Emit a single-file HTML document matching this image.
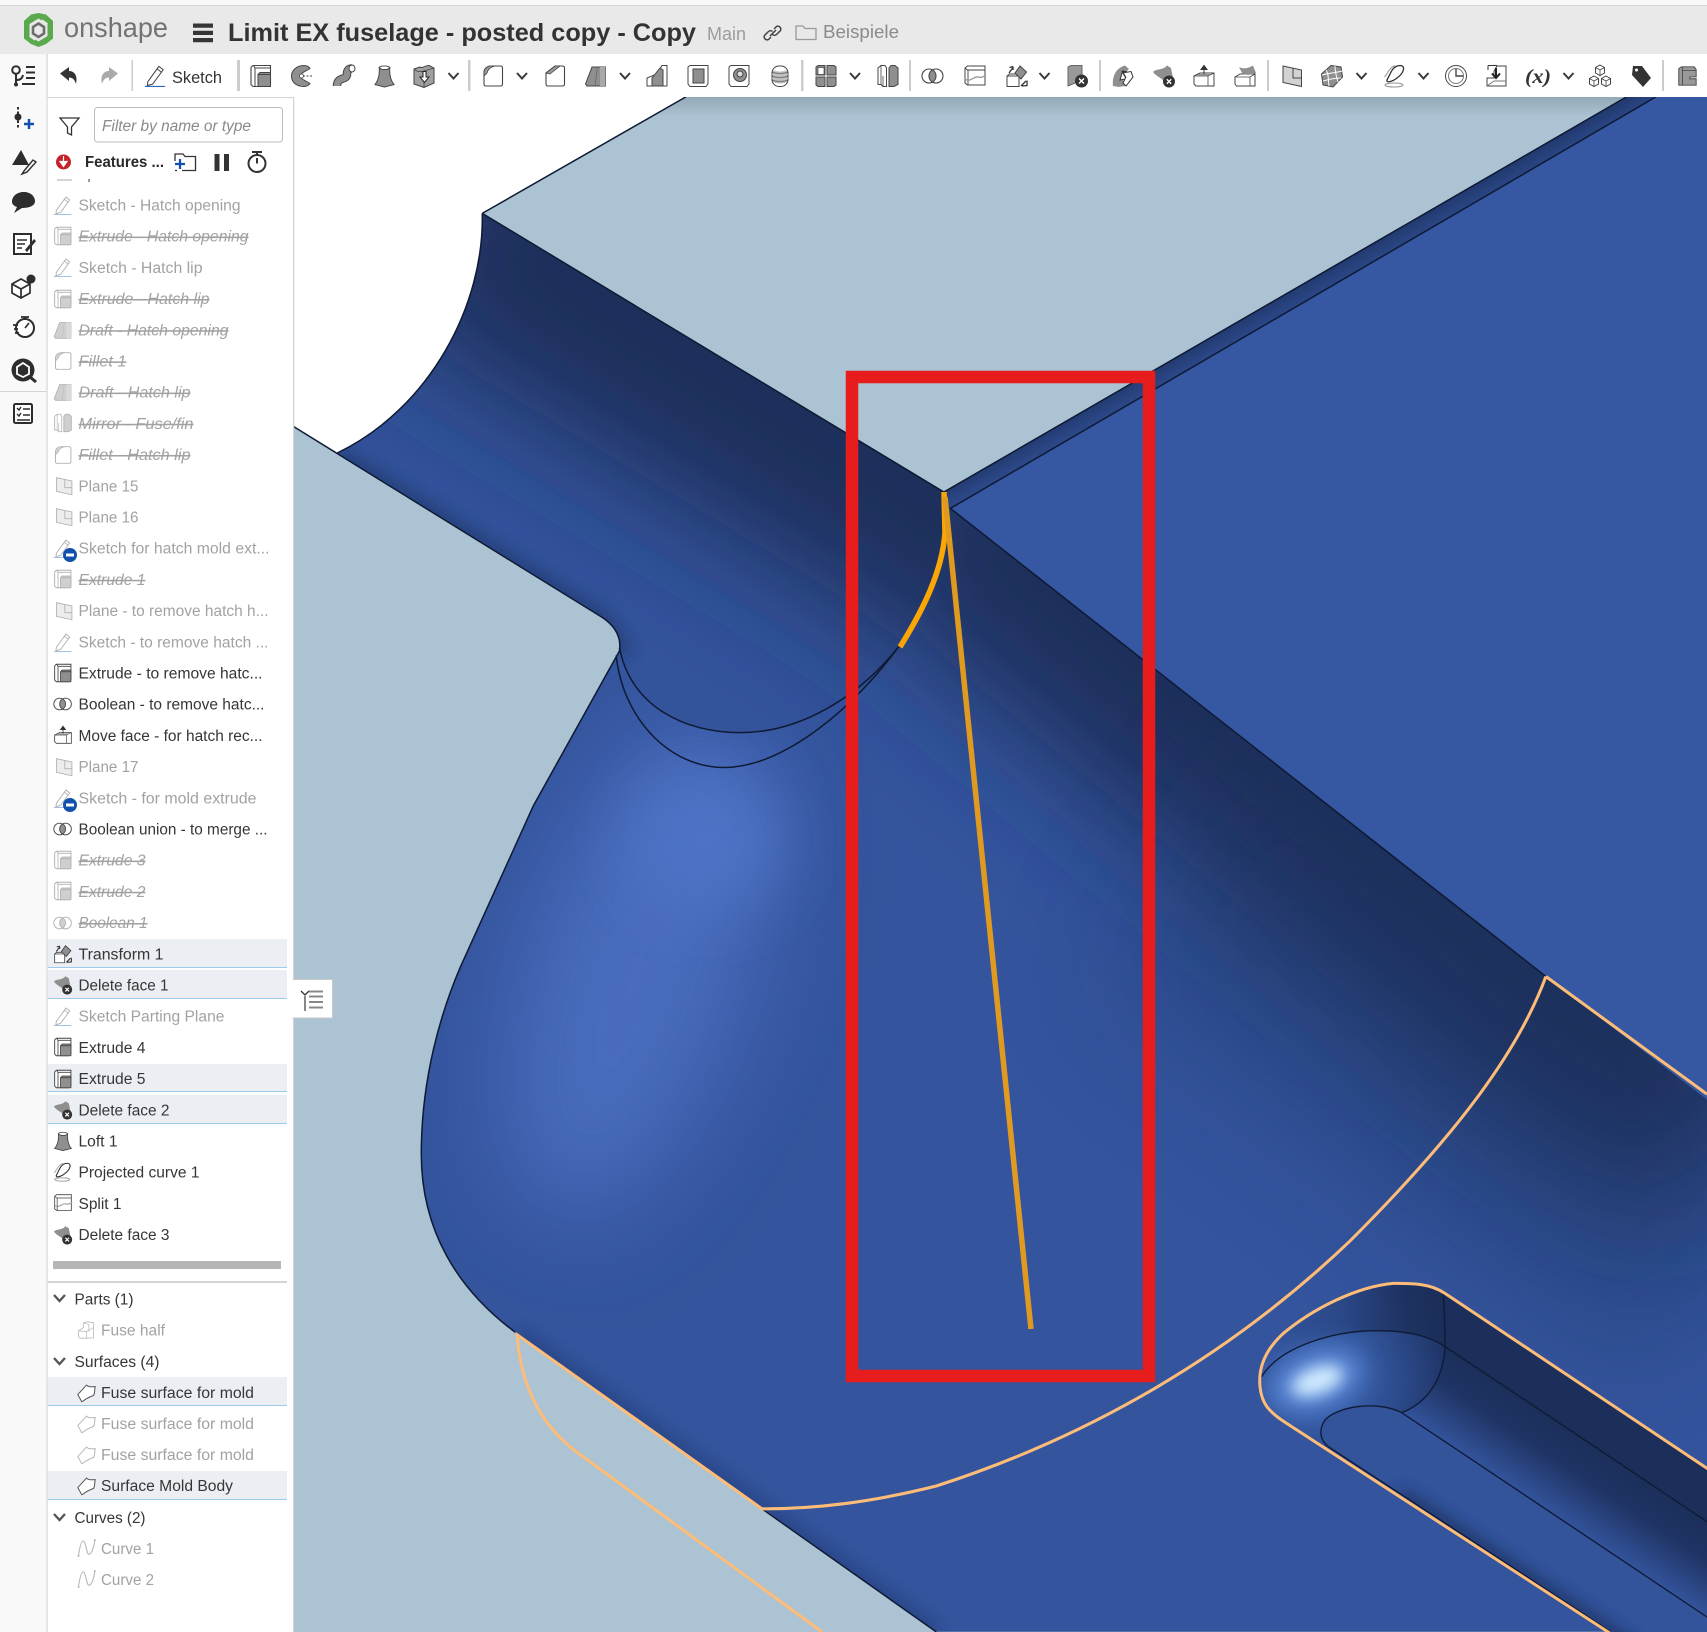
<!DOCTYPE html>
<html><head><meta charset="utf-8"><title>Onshape</title>
<style>
html,body{margin:0;padding:0;background:#fff;width:1707px;height:1632px;overflow:hidden}
svg{display:block}
text{font-family:"Liberation Sans",sans-serif}
.r text,text.r{font-size:15.5px}
.a{fill:#363636}.d{fill:#a2a2a2}
.s{font-style:italic;text-decoration:line-through}
</style></head><body>
<svg xmlns="http://www.w3.org/2000/svg" width="1707" height="1632" viewBox="0 0 1707 1632">
<defs>
<filter id="b60" x="-60%" y="-60%" width="220%" height="220%"><feGaussianBlur stdDeviation="58"/></filter>
<filter id="b50" x="-50%" y="-50%" width="200%" height="200%"><feGaussianBlur stdDeviation="46"/></filter>
<filter id="b30" x="-50%" y="-50%" width="200%" height="200%"><feGaussianBlur stdDeviation="28"/></filter>
<filter id="b8" x="-50%" y="-50%" width="200%" height="200%"><feGaussianBlur stdDeviation="7"/></filter>
<filter id="bp" x="-100%" y="-100%" width="300%" height="300%"><feGaussianBlur stdDeviation="22"/></filter>
<filter id="bq" x="-100%" y="-100%" width="300%" height="300%"><feGaussianBlur stdDeviation="38"/></filter>
<clipPath id="body"><path d="M443 196L867 452L1494 89H1568V1499H860L475 1225C420 1185 387 1130 387 1060C387 990 405 930 423 888L490 740L569 598C571 585 565 575 553 567L310 416C395 375 445 280 443 196Z"/></clipPath>
<clipPath id="chan"><path d="M443 196L867 452L868 490C865 525 848 560 827 594C790 640 735 673 680 673C630 673 580 650 569 598C571 585 565 575 553 567L310 416C395 375 445 280 443 196Z"/></clipPath>
<clipPath id="plane"><path d="M630 89H1494L867 452L443 196Z"/></clipPath>
<clipPath id="pock"><path d="M1521 685L735 160C690 130 640 130 580 130C470 140 340 205 250 280C190 335 175 390 180 440C185 490 205 515 260 550L1240 1176H1530V685Z"/></clipPath>
<clipPath id="isl"><path d="M605 518L1530 1137V1180H1240L385 620C360 600 355 570 375 540C410 500 530 480 605 518Z"/></clipPath>
<linearGradient id="strip" gradientUnits="userSpaceOnUse" x1="1180" y1="270" x2="1196" y2="298"><stop offset="0" stop-color="#223a70"/><stop offset="1" stop-color="#34559f"/></linearGradient>
<linearGradient id="wall" gradientUnits="userSpaceOnUse" x1="190" y1="300" x2="735" y2="240"><stop offset="0" stop-color="#33559f"/><stop offset=".45" stop-color="#2a4786"/><stop offset=".8" stop-color="#1e3261"/><stop offset="1" stop-color="#1b2d58"/></linearGradient>
<linearGradient id="floor" gradientUnits="userSpaceOnUse" x1="735" y1="320" x2="603" y2="517"><stop offset="0" stop-color="#1c2f5b"/><stop offset=".4" stop-color="#1f3464"/><stop offset="1" stop-color="#33539b"/></linearGradient>
<radialGradient id="fend" gradientUnits="userSpaceOnUse" cx="350" cy="420" r="420"><stop offset="0" stop-color="#3a64b5"/><stop offset=".55" stop-color="#2e4e90"/><stop offset="1" stop-color="#1d3060"/></radialGradient>
<linearGradient id="shade" x1="0" y1="0" x2="0" y2="1"><stop offset="0" stop-color="#000" stop-opacity=".14"/><stop offset="1" stop-color="#000" stop-opacity="0"/></linearGradient>

<symbol id="ext" viewBox="0 0 24 24"><path d="M2 3.500L4 1.500H21.500V20L19.500 22.500H4L2 20.500Z" fill="#fff" stroke="#444" stroke-width="1.100"/><path d="M4.500 1.500L6 4H21.500M6 4V22.500" fill="none" stroke="#444" stroke-width="1"/><path d="M9 10.500L11 8.500H21.500V22.500H9Z" fill="#8f8f8f" stroke="#444" stroke-width="1"/><path d="M9 10.500H21" fill="none" stroke="#444" stroke-width="1"/></symbol>
<symbol id="fil" viewBox="0 0 24 24"><path d="M3 20V8.500C3 4 7 2 10 2H19.500Q21.500 2 21.500 4V20Q21.500 22 19.500 22H5Q3 22 3 20Z" fill="#fff" stroke="#444" stroke-width="1.100"/><path d="M3 8.500C3 4 7 2 10 2H14C10 3 7 5 6 9L3 12Z" fill="#999" stroke="#444" stroke-width=".8"/></symbol>
<symbol id="cha" viewBox="0 0 24 24"><path d="M3 20V9L12 2H19.500Q21.500 2 21.500 4V20Q21.500 22 19.500 22H5Q3 22 3 20Z" fill="#fff" stroke="#444" stroke-width="1.100"/><path d="M3 9L12 2H17L7 10Z" fill="#999" stroke="#444" stroke-width=".8"/></symbol>
<symbol id="dra" viewBox="0 0 24 24"><path d="M1.500 20L8 3H21.500V22H3Z" fill="#8f8f8f" stroke="#444" stroke-width="1"/><path d="M13.500 3L11 22" fill="none" stroke="#666" stroke-width=".8"/><path d="M16 3V22H21.500V3Z" fill="#a9a9a9"/></symbol>
<symbol id="pln" viewBox="0 0 24 24"><path d="M3 2L21.500 6V22.500L3 18.500Z" fill="#d2d2d2" stroke="#444" stroke-width="1"/><path d="M13 4V14L21.500 14" fill="none" stroke="#444" stroke-width="1"/></symbol>
<symbol id="ske" viewBox="0 0 24 24"><path d="M4 18.500L15.500 2.500L20 6L9 21L3.500 22.500Z" fill="#fff" stroke="#444" stroke-width="1.100"/><path d="M13.500 5L18 8.500" stroke="#444" fill="none"/><path d="M1 23.500H22" stroke="#2e66bd" stroke-width="1.300"/></symbol>
<symbol id="mir" viewBox="0 0 24 24"><path d="M2 4L5 1.500H9L10.500 4V22.500H7L5 20.500H2Z" fill="#fff" stroke="#444"/><path d="M5 1.500V20.500M7 12V22.500M2 20.500H5" fill="none" stroke="#444" stroke-width=".8"/><path d="M13 4L15 1.500H19L22 4V20.500L18 22.500H13Z" fill="#8f8f8f" stroke="#444"/></symbol>
<symbol id="boo" viewBox="0 0 24 24"><circle cx="8" cy="12" r="7" fill="#fff" stroke="#444" stroke-width="1.100"/><circle cx="15" cy="12" r="7" fill="#fff" fill-opacity=".1" stroke="#444" stroke-width="1.100"/><path d="M11.500 6A7 7 0 0 1 11.500 18A7 7 0 0 1 11.500 6Z" fill="#8f8f8f" stroke="#444" stroke-width=".8"/></symbol>
<symbol id="del" viewBox="0 0 24 24"><path d="M1 8C5 4 10 7 15 1.500L19 4L21 14L14 19C10 14 5 13 1 8Z" fill="#8f8f8f"/><circle cx="17" cy="17.500" r="6" fill="#333"/><path d="M14.800 15.300L19.200 19.700M19.200 15.300L14.800 19.700" stroke="#fff" stroke-width="1.400"/></symbol>
<symbol id="mov" viewBox="0 0 24 24"><path d="M2 12L8 9H22V22H4L2 20Z" fill="#fff" stroke="#444" stroke-width="1"/><path d="M2 12H16L22 9M16 12V22" fill="none" stroke="#444" stroke-width=".8"/><path d="M4 12L7 10H19L16 12Z" fill="#8f8f8f"/><path d="M12 10V2M9 5.500L12 1.500L15 5.500Z" fill="#333" stroke="#333"/></symbol>
<symbol id="rep" viewBox="0 0 24 24"><path d="M2 13L7 10H22V22H3.500L2 20Z" fill="#fff" stroke="#444"/><path d="M2 13H17L22 10M17 13V22" fill="none" stroke="#444" stroke-width=".8"/><path d="M6 3C10 5 14 5 20 1.500L23 9C18 11 12 12 9 9Z" fill="#8f8f8f"/></symbol>
<symbol id="spl" viewBox="0 0 24 24"><path d="M2 4L4.500 2H22V21H4.500L2 19Z" fill="#fff" stroke="#444" stroke-width="1"/><path d="M2 4L4.500 6H22M5 6V21" fill="none" stroke="#444" stroke-width=".9"/><path d="M2 15C7 19 11 12 15 13C18 14 20 13 23 11" fill="none" stroke="#999" stroke-width="1.300"/></symbol>
<symbol id="tra" viewBox="0 0 24 24"><path d="M2 12H14V22.500H2Z" fill="#fff" stroke="#444"/><path d="M2 12L4.500 10H14M14 12V10" fill="none" stroke="#444"/><path d="M15 2L21.500 8L16 15L10 9Z" fill="#8f8f8f" stroke="#444"/><path d="M4 9L8 3.500M8 2.500L4.500 3.500M8 2.500L8 6M16 22L21 17M22 16.500L22 21.500L17 22" fill="none" stroke="#333" stroke-width="1.300"/></symbol>
<symbol id="lof" viewBox="0 0 24 24"><ellipse cx="12" cy="3.500" rx="5.500" ry="2" fill="#fff" stroke="#444"/><path d="M6.500 3.500C7 10 6 16 2 21L12 23.500L22 21C18 16 17 10 17.500 3.500C15 6 9 6 6.500 3.500Z" fill="#8f8f8f" stroke="#444"/></symbol>
<symbol id="prj" viewBox="0 0 24 24"><ellipse cx="11" cy="21" rx="9" ry="2" fill="none" stroke="#999" stroke-width="1.100"/><path d="M4 16C8 9 9 2 17 1.500C23 1.500 21 9 14 14C9 18 3 19 4 16Z" fill="none" stroke="#333" stroke-width="1.300"/><path d="M1.500 13C5 9 6 4 12 1.500" fill="none" stroke="#999" stroke-width="1"/></symbol>
<symbol id="par" viewBox="0 0 24 24"><path d="M2 13L8 9V3L13 1.500L21 3V22L4 22.500L2 20Z" fill="#fff" stroke="#555"/><path d="M2 13L12 14L21 9M12 14V22M8 3L15 5V14" fill="none" stroke="#555" stroke-width=".9"/></symbol>
<symbol id="sur" viewBox="0 0 24 24"><path d="M1 14L12 2C15 5 18 4 23 4C22 8 23 11 21 15C17 17 14 17 8 22L6 23Z" fill="#fff" stroke="#555" stroke-width="1.300"/></symbol>
<symbol id="cur" viewBox="0 0 24 24"><path d="M2 21C3 14 5 3 8 3C11 3 12 20 15 20C19 20 22 8 22.500 2" fill="none" stroke="#555" stroke-width="1.400"/><circle cx="2" cy="22" r="1.300" fill="#555"/><circle cx="22.500" cy="2" r="1.300" fill="#555"/></symbol>
<symbol id="rev" viewBox="0 0 24 24"><path d="M14 1.500C6 1.500 1.500 7 1.500 12C1.500 18 6 22.500 14 22.500C17 22.500 19 21 20 19.500L13 15.500A4 4 0 0 1 13 8.500L20 4.500C19 3 17 1.500 14 1.500Z" fill="#8f8f8f" stroke="#444"/><circle cx="11.500" cy="12" r="2" fill="#fff" stroke="#444" stroke-width=".8"/><path d="M13 12H23" fill="none" stroke="#444" stroke-dasharray="2 1.500"/></symbol>
<symbol id="swe" viewBox="0 0 24 24"><path d="M5 22C5 12 15 17 15 10C15 6 17 4.500 20 4.500" fill="none" stroke="#444" stroke-width="8.500"/><path d="M5 22C5 12 15 17 15 10C15 6 17 4.500 20 4.500" fill="none" stroke="#8f8f8f" stroke-width="6.500"/><ellipse cx="20" cy="4.500" rx="3" ry="3.500" fill="#fff" stroke="#444"/></symbol>
<symbol id="thk" viewBox="0 0 24 24"><path d="M2 5L8 3C10 5 14 1 17 1.500L22 4V19L12 23.500L2 20Z" fill="#9f9f9f" stroke="#444"/><path d="M2 5C5 8 8 8 12 7C15 6 19 5 22 4M12 7V23" fill="none" stroke="#444" stroke-width=".8"/><path d="M11 7.500H14V13H17L12.500 18.500L8 13H11Z" fill="#fff" stroke="#222" stroke-width="1"/></symbol>
<symbol id="rib" viewBox="0 0 24 24"><path d="M2 22V14L12 10L17 1.500H22V22Z" fill="#fff" stroke="#444"/><path d="M7 14L15 4L18 6L18 22H7Z" fill="#8f8f8f" stroke="#444"/></symbol>
<symbol id="she" viewBox="0 0 24 24"><path d="M2 3L4 1.500H22V20L20 22.500H4L2 20Z" fill="#fff" stroke="#444"/><path d="M7 5H18V19H7Z" fill="#8f8f8f" stroke="#444"/></symbol>
<symbol id="hol" viewBox="0 0 24 24"><path d="M2 3L4 1.500H22V20L20 22.500H4L2 20Z" fill="#fff" stroke="#444"/><circle cx="13" cy="11" r="6.500" fill="#8f8f8f" stroke="#444"/><circle cx="13" cy="10" r="3" fill="#ddd" stroke="#444"/></symbol>
<symbol id="thr" viewBox="0 0 24 24"><rect x="4" y="2" width="16" height="20.500" rx="7" fill="#fff" stroke="#444"/><path d="M4 8C8 10 16 10 20 8M4 12C8 14 16 14 20 12M4 16C8 18 16 18 20 16" fill="none" stroke="#555" stroke-width="1.300"/><path d="M5 6C9 8 15 8 19 6V18C15 20 9 20 5 18Z" fill="#999" fill-opacity=".6"/></symbol>
<symbol id="pat" viewBox="0 0 24 24"><path d="M2 3L4 1.500H11V11H2ZM13 1.500H20L22 3V11H13ZM2 13H11V22.500H4L2 21ZM13 13H22V21L20 22.500H13Z" fill="#8f8f8f" stroke="#444"/><path d="M4 3.500H10V10.500H4Z" fill="#fff" stroke="#444" stroke-width=".7"/></symbol>
<symbol id="dpt" viewBox="0 0 24 24"><path d="M2 3L5 1.500H16V16L2 22Z" fill="#999" stroke="#666"/><circle cx="15.500" cy="17" r="6.500" fill="#333"/><path d="M13 14.500L18 19.500M18 14.500L13 19.500" stroke="#fff" stroke-width="1.500"/></symbol>
<symbol id="mfi" viewBox="0 0 24 24"><path d="M2 22C1 12 5 4 14 1.500L18 5L11 12L14 22L8 23Z" fill="#8f8f8f"/><path d="M11 9L20 7.500L22 13L15 22L12 19L14 15L9 16Z" fill="#fff" stroke="#333"/><path d="M11 7L15 14M11 7L16 8" stroke="#333" stroke-width="1.300"/></symbol>
<symbol id="msh" viewBox="0 0 24 24"><path d="M11 1.500L21 3L22.500 13L13 23L3 21L1.500 10Z" fill="#8f8f8f" stroke="#444"/><path d="M6 6C9 10 8 16 9 22M15 2C15 9 17 14 18 18M2 11C9 9 15 9 22 7M3 17C10 15 15 14 21 14" fill="none" stroke="#fff" stroke-width="1"/></symbol>
<symbol id="mat" viewBox="0 0 24 24"><circle cx="12" cy="12" r="10.500" fill="#fff" stroke="#444"/><circle cx="12" cy="12" r="7.500" fill="none" stroke="#777"/><path d="M12 5V12H19" fill="none" stroke="#444" stroke-width="1.400"/></symbol>
<symbol id="imp" viewBox="0 0 24 24"><path d="M2 22V14H9V7L12 2H21V22Z" fill="#fff" stroke="#444"/><path d="M3 1.500H12M3 1.500V6" stroke="#333" fill="none"/><path d="M11 4V13M7 9.500L11 14L15 9.500" fill="none" stroke="#222" stroke-width="2"/><path d="M2 22L9 17H21" fill="none" stroke="#777"/></symbol>
<symbol id="asm" viewBox="0 0 24 24"><path d="M12 1L16.500 3.500V9L12 11.500L7.500 9V3.500ZM6 12L10.500 14.500V20L6 22.500L1.500 20V14.500ZM18 12L22.500 14.500V20L18 22.500L13.500 20V14.500Z" fill="#fff" stroke="#444"/><path d="M7.500 3.500L12 6L16.500 3.500M12 6V11.500M1.500 14.500L6 17L10.500 14.500M6 17V22.500M13.500 14.500L18 17L22.500 14.500M18 17V22.500" fill="none" stroke="#444" stroke-width=".8"/></symbol>
<symbol id="tag" viewBox="0 0 24 24"><path d="M4 2H13L22 14L14 23L3 11Z" fill="#333"/><circle cx="7.500" cy="6" r="1.500" fill="#fff"/></symbol>
<symbol id="lst" viewBox="0 0 24 24"><path d="M3 22V4L6 2H20L22 5V13H15V15H22V22H6Z" fill="#999" stroke="#444"/><path d="M7 2V6H22M7 6V22" fill="none" stroke="#444" stroke-width=".9"/></symbol>
<symbol id="chv" viewBox="0 0 12 8"><path d="M1 1L6 6.500L11 1" fill="none" stroke="#3a3a3a" stroke-width="2"/></symbol>
</defs>

<!-- 3D viewport -->
<rect x="293" y="97" width="1414" height="1535" fill="#abc3d3"/>
<g transform="scale(1.08865)">
 <path d="M269 89H630L443 196C445 280 395 375 310 416L269 392Z" fill="#fff"/>
 <rect x="270" y="89" width="1300" height="18" fill="url(#shade)" clip-path="url(#plane)"/>
 <g clip-path="url(#body)">
  <rect x="270" y="89" width="1300" height="1410" fill="#34549d"/>
  <ellipse cx="585" cy="890" rx="100" ry="235" transform="rotate(18 585 890)" fill="#5176cb" fill-opacity=".72" filter="url(#b50)"/>
  <ellipse cx="650" cy="770" rx="70" ry="65" fill="#5074c8" fill-opacity=".8" filter="url(#b30)"/>
  <path d="M850 420L1420 897L1600 1020" fill="none" stroke="#1b2d5a" stroke-width="260" filter="url(#b60)"/>
  <path d="M1100 780L1600 1150" fill="none" stroke="#1f3564" stroke-width="300" opacity=".35" filter="url(#b60)"/>
  <path d="M475 1225L860 1499" fill="none" stroke="#1e3264" stroke-width="10" opacity=".55" filter="url(#b8)"/>
 </g>
 <g clip-path="url(#chan)">
  <rect x="270" y="150" width="700" height="560" fill="#33539b"/>
  <path d="M400 170L867 452L1000 560" fill="none" stroke="#1b2d5a" stroke-width="260" filter="url(#b60)"/>
  <path d="M310 416L553 567L575 600" fill="none" stroke="#1c2e5c" stroke-width="10" opacity=".7" filter="url(#b8)"/>
 </g>
 <path d="M873 467L1521 89H1568V1010L1420 897Z" fill="#3657a2"/>
 <path d="M867 452L1494 89H1521L873 467Z" fill="url(#strip)"/>
 <g fill="none" stroke="#0f1a34" stroke-width="1.400">
  <path d="M443 196L867 452L1494 89M873 467L1521 89M873 467L1420 897M630 89L443 196"/>
  <path d="M310 416C395 375 445 280 443 196M270 392L553 567C565 575 571 585 569 598L490 740L423 888C405 930 387 990 387 1060C387 1130 420 1185 475 1225M700 1386L860 1499"/>
  <path d="M569 595C580 650 630 673 680 673C735 673 790 640 827 592M566 602C572 660 615 705 665 705C720 705 785 650 827 592"/>
 </g>
 <g fill="none" stroke="#fdbc78" stroke-width="2.800">
  <path d="M1420 897C1395 965 1340 1040 1240 1140C1130 1245 1000 1320 860 1365C800 1380 750 1386 700 1386L475 1226C478 1270 495 1308 530 1334L755 1499"/>
  <path d="M1420 897L1568 1005"/>
 </g>
</g>

<!-- pocket -->
<g transform="translate(1200 1240) scale(.33333)">
 <g clip-path="url(#pock)">
  <rect x="170" y="120" width="1360" height="1060" fill="#2f4e95"/>
  <path d="M735 160L1530 691V860L735 320Z" fill="#1c2f5b"/>
  <path d="M735 100H540C400 120 220 200 170 440C250 330 400 272 530 272C640 272 700 295 735 320Z" fill="url(#wall)"/>
  <path d="M735 320L1530 851V1137L605 518C680 490 730 420 735 320Z" fill="url(#floor)"/>
  <path d="M185 410C240 320 400 272 530 272C640 272 700 295 735 320C730 420 680 490 605 518C530 480 410 500 375 540C355 570 360 600 385 620L260 550C205 515 185 490 180 440Z" fill="url(#fend)"/>
  <ellipse cx="350" cy="420" rx="150" ry="85" transform="rotate(-20 350 420)" fill="#5a86d6" filter="url(#bq)"/>
  <ellipse cx="352" cy="422" rx="80" ry="40" transform="rotate(-20 352 422)" fill="#d0ecff" filter="url(#bp)"/>
  <path d="M605 518L1530 1137V1180H1240L385 620C360 600 355 570 375 540C410 500 530 480 605 518Z" fill="#33539b"/>
  <path d="M600 760L1300 1220" fill="none" stroke="#1d3160" stroke-width="34" clip-path="url(#isl)" filter="url(#bp)"/>
 </g>
 <g fill="none" stroke="#0f1a34" stroke-width="4">
  <path d="M185 410C240 320 400 272 530 272C640 272 700 295 735 320L1530 851"/>
  <path d="M730 165C735 230 735 280 735 320C730 420 680 490 605 518L1530 1137"/>
  <path d="M605 518C530 480 410 500 375 540C355 570 360 600 385 620L1240 1180"/>
 </g>
 <path d="M1530 691L735 160C690 130 640 130 580 130C470 140 340 205 250 280C190 335 175 390 180 440C185 490 205 515 260 550L1240 1186" fill="none" stroke="#fdbc78" stroke-width="9"/>
</g>

<!-- highlighted orange curves -->
<path d="M944 492L945 533C942 572 923 610 900 647" fill="none" stroke="#fca605" stroke-width="5.500"/>
<path d="M945 497L1031 1329" fill="none" stroke="#df9a1f" stroke-width="5.500"/>
<!-- red rectangle -->
<rect x="852" y="377" width="297" height="999" fill="none" stroke="#e71c1c" stroke-width="12.500"/>

<!-- top bars -->
<rect x="0" y="0" width="1707" height="5" fill="#f8f8f8"/>
<rect x="0" y="5" width="1707" height="1" fill="#d6d6d6"/>
<rect x="0" y="6" width="1707" height="48" fill="#e9e9e9"/>
<rect x="0" y="54" width="1707" height="43" fill="#fff"/>

<!-- logo -->
<path d="M31 14.500L38.500 13L46 14.500L53 21V38.500L46 44L38.500 47L31 44L24 38.500V21Z" fill="#5aa94d"/>
<path d="M38.500 18.500L47.500 24V36L38.500 41.500L29.500 36V24Z" fill="#e9e9e9"/>
<path d="M38.500 23.500L44 27V33.500L38.500 37L33 33.500V27Z" fill="none" stroke="#6e6e6e" stroke-width="2.600"/>
<path d="M47.500 24L42 20M29.500 36L35 40" stroke="#e9e9e9" stroke-width="1.500"/>
<text x="64" y="37" font-size="28" fill="#737373" textLength="104" lengthAdjust="spacingAndGlyphs">onshape</text>
<path d="M193 23.500h20v4.300h-20zM193 30.700h20v4.300h-20zM193 38h20v4.300h-20z" fill="#363636"/>
<text x="228" y="41" font-size="25" font-weight="700" fill="#333" textLength="468" lengthAdjust="spacingAndGlyphs">Limit EX fuselage - posted copy - Copy</text>
<text x="707" y="40" font-size="18" fill="#9c9c9c" textLength="39" lengthAdjust="spacingAndGlyphs">Main</text>
<path d="M771 37l-2.500 2.500a3 3 0 0 1-4-4l4-4a3 3 0 0 1 4 0M774 29l2.500-2.500a3 3 0 0 1 4 4l-4 4a3 3 0 0 1-4 0M770 36l6-6" fill="none" stroke="#444" stroke-width="1.500"/>
<path d="M796 39V26H803L805 28.500H816V39.500H796Z" fill="none" stroke="#999" stroke-width="1.300"/>
<text x="823" y="38" font-size="18" fill="#8b8b8b" textLength="76" lengthAdjust="spacingAndGlyphs">Beispiele</text>

<!-- toolbar -->
<path d="M60 73.500L69 67V71C74 71 78 75 76 84C74.500 79 72 77.500 69 77.500V81Z" fill="#333"/>
<path d="M118 73.500L109 67V71C104 71 100 75 102 84C103.500 79 106 77.500 109 77.500V81Z" fill="#aaa"/>
<g fill="#ccc"><rect x="131.500" y="60" width="1.500" height="31"/><rect x="237" y="60" width="3" height="31"/><rect x="468" y="60" width="2.500" height="31"/><rect x="801" y="60" width="2.500" height="31"/><rect x="909" y="60" width="2" height="31"/><rect x="1099" y="60" width="2" height="31"/><rect x="1267" y="60" width="2" height="31"/><rect x="1662" y="60" width="2" height="31"/></g>
<use href="#ske" x="144" y="64" width="23" height="23"/>
<text x="172" y="83" font-size="17" fill="#333" textLength="50" lengthAdjust="spacingAndGlyphs">Sketch</text>
<use href="#ext" x="249" y="64" width="24" height="24"/>
<use href="#rev" x="290" y="64" width="24" height="24"/>
<use href="#swe" x="332" y="64" width="24" height="24"/>
<use href="#lof" x="373" y="64" width="23" height="24"/>
<use href="#thk" x="412" y="64" width="24" height="24"/>
<use href="#chv" x="447" y="72" width="13" height="8"/>
<use href="#fil" x="481" y="64" width="24" height="24"/>
<use href="#chv" x="516" y="72" width="12" height="8"/>
<use href="#cha" x="543" y="64" width="24" height="24"/>
<use href="#dra" x="584" y="64" width="24" height="24"/>
<use href="#chv" x="619" y="72" width="12" height="8"/>
<use href="#rib" x="645" y="64" width="24" height="24"/>
<use href="#she" x="686" y="64" width="24" height="24"/>
<use href="#hol" x="727" y="64" width="24" height="24"/>
<use href="#thr" x="768" y="64" width="24" height="24"/>
<use href="#pat" x="814" y="64" width="24" height="24"/>
<use href="#chv" x="849" y="72" width="12" height="8"/>
<use href="#mir" x="876" y="64" width="24" height="24"/>
<use href="#boo" x="921" y="64" width="24" height="24"/>
<use href="#spl" x="963" y="64" width="24" height="24"/>
<use href="#tra" x="1005" y="64" width="24" height="24"/>
<use href="#chv" x="1038" y="72" width="13" height="8"/>
<use href="#dpt" x="1066" y="64" width="24" height="24"/>
<use href="#mfi" x="1111" y="64" width="24" height="24"/>
<use href="#del" x="1152" y="64" width="24" height="24"/>
<use href="#mov" x="1192" y="64" width="24" height="24"/>
<use href="#rep" x="1233" y="64" width="24" height="24"/>
<use href="#pln" x="1280" y="64" width="24" height="24"/>
<use href="#msh" x="1320" y="64" width="24" height="24"/>
<use href="#chv" x="1355" y="72" width="13" height="8"/>
<use href="#prj" x="1383" y="64" width="24" height="24"/>
<use href="#chv" x="1417" y="72" width="13" height="8"/>
<use href="#mat" x="1444" y="64" width="24" height="24"/>
<use href="#imp" x="1485" y="64" width="24" height="24"/>
<text x="1525" y="83" font-size="20" font-weight="700" font-style="italic" style="font-family:'Liberation Serif',serif" fill="#333" textLength="26" lengthAdjust="spacingAndGlyphs">(x)</text>
<use href="#chv" x="1562" y="72" width="13" height="8"/>
<use href="#asm" x="1588" y="64" width="24" height="24"/>
<use href="#tag" x="1629" y="64" width="24" height="24"/>
<use href="#lst" x="1676" y="64" width="22" height="24"/>

<!-- left rail -->
<rect x="0" y="54" width="47" height="1578" fill="#f9f9f9"/>
<rect x="46.500" y="54" width="1.200" height="1578" fill="#d4d4d4"/>
<rect x="0" y="391" width="46.500" height="1" fill="#d4d4d4"/>
<g fill="none" stroke="#2d2d2d" stroke-width="2">
 <circle cx="16" cy="70" r="3.800"/><path d="M16 74V84M16 80C20 80 22 79 23 75M26 67H35M26 72.500H35M26 78H35M22 84H35"/>
</g>
<circle cx="16" cy="84.500" r="2" fill="#2d2d2d"/>
<circle cx="18" cy="117" r="3.500" fill="#2d2d2d"/><path d="M18 107V129" stroke="#2d2d2d" stroke-width="2" stroke-dasharray="2.500 2"/><path d="M29 119V129M24 124H34" stroke="#1250ae" stroke-width="2.500"/>
<path d="M21 150L29 165H12Z" fill="#2d2d2d"/><path d="M24 171L33 160L36 162L27 172L22 174Z" fill="#fff" stroke="#2d2d2d" stroke-width="1.400"/>
<path d="M12 202C12 196 17 192 24 192C30 192 35 196 35 201C35 206 29 208 22 208L14 213L17 207C14 206 12 204 12 202Z" fill="#2d2d2d"/>
<path d="M14 234H31V254H14Z" fill="#fff" stroke="#2d2d2d" stroke-width="2"/><path d="M17 240H27M17 244H25M17 248H22" stroke="#2d2d2d" stroke-width="1.600"/><path d="M25 250L34 239L36 241L27 252Z" fill="#2d2d2d"/>
<path d="M12 284L21 279L30 284V293L21 298L12 293ZM12 284L21 289L30 284M21 289V298" fill="#fff" stroke="#2d2d2d" stroke-width="1.700"/><circle cx="31" cy="279" r="4.500" fill="#2d2d2d"/>
<circle cx="25" cy="328" r="9" fill="#fff" stroke="#2d2d2d" stroke-width="2"/><path d="M25 328L29 323M21 317H29M25 317V319M13 325H18M14 329H18M15 333H19" stroke="#2d2d2d" stroke-width="1.700"/>
<circle cx="23" cy="370" r="11.500" fill="#2d2d2d"/><path d="M23 363L29 367V374L23 377L17 374V367Z" fill="none" stroke="#fff" stroke-width="1.800"/><path d="M30 377L36 382" stroke="#2d2d2d" stroke-width="3"/>
<rect x="14" y="404" width="18" height="19" rx="1.500" fill="#fff" stroke="#2d2d2d" stroke-width="2"/><path d="M17 408L19 410L21 407M17 414L19 416L21 413M23 409H30M23 415H30M17 420H30" fill="none" stroke="#2d2d2d" stroke-width="1.400"/>

<!-- feature panel -->
<rect x="47.700" y="97" width="245.300" height="1535" fill="#fff"/>
<rect x="47" y="97" width="246" height="1" fill="#d6d6d6"/>
<rect x="293" y="97" width="1.200" height="1535" fill="#d2d2d2"/>
<path d="M60 118H79L71.500 127V135L67.500 133V127Z" fill="#fff" stroke="#333" stroke-width="1.300"/>
<rect x="94.500" y="107.500" width="188" height="34.500" rx="3" fill="#fff" stroke="#bcbcbc"/>
<text x="102" y="131" font-size="15.500" font-style="italic" fill="#8a8a8a" textLength="149" lengthAdjust="spacingAndGlyphs">Filter by name or type</text>
<circle cx="63.500" cy="162" r="7.500" fill="#c5222a"/><path d="M63.500 156V165M60 161.500L63.500 166.500L67 161.500Z" fill="#fff" stroke="#fff" stroke-width="1.200"/>
<text x="85" y="167" font-size="15.500" font-weight="700" fill="#2a2a2a" textLength="79" lengthAdjust="spacingAndGlyphs">Features ...</text>
<path d="M175 161V154H183L185 156.500H195.500V170.500H182M175 170.500H177" fill="none" stroke="#333" stroke-width="1.300"/><path d="M180 159V169M175 164H185" stroke="#1250ae" stroke-width="2.200"/>
<path d="M214.500 154h5v17h-5zM224 154h5v17h-5z" fill="#333"/>
<circle cx="257" cy="163.500" r="8.500" fill="#fff" stroke="#333" stroke-width="2"/><path d="M252 152H262M257 152V155M257 163.500V158" stroke="#333" stroke-width="2"/>
<path d="M57 180H72" stroke="#aaa" stroke-width="1"/><path d="M89 179V182" stroke="#333"/>

<!-- highlighted rows -->
<g fill="#ebeff3"><rect x="47.700" y="939" width="239.300" height="28"/><rect x="47.700" y="970" width="239.300" height="28"/><rect x="47.700" y="1064" width="239.300" height="27"/><rect x="47.700" y="1095" width="239.300" height="28"/><rect x="47.700" y="1377" width="239.300" height="28"/><rect x="47.700" y="1471" width="239.300" height="28"/></g>
<g fill="#9ccbeb"><rect x="47.700" y="967" width="239.300" height="1"/><rect x="47.700" y="998" width="239.300" height="1"/><rect x="47.700" y="1091" width="239.300" height="1"/><rect x="47.700" y="1123" width="239.300" height="1"/><rect x="47.700" y="1405" width="239.300" height="1"/><rect x="47.700" y="1499" width="239.300" height="1"/></g>

<!-- icons -->
<g opacity=".42">
<use href="#ske" x="53" y="195" width="20" height="20"/>
<use href="#ext" x="53" y="226" width="20" height="20"/>
<use href="#ske" x="53" y="257" width="20" height="20"/>
<use href="#ext" x="53" y="289" width="20" height="20"/>
<use href="#dra" x="53" y="320" width="20" height="20"/>
<use href="#fil" x="53" y="351" width="20" height="20"/>
<use href="#dra" x="53" y="382" width="20" height="20"/>
<use href="#mir" x="53" y="413" width="20" height="20"/>
<use href="#fil" x="53" y="445" width="20" height="20"/>
<use href="#pln" x="54" y="476" width="20" height="20"/>
<use href="#pln" x="54" y="507" width="20" height="20"/>
<use href="#ske" x="53" y="538" width="20" height="20"/>
<use href="#ext" x="53" y="569" width="20" height="20"/>
<use href="#pln" x="54" y="601" width="20" height="20"/>
<use href="#ske" x="53" y="632" width="20" height="20"/>
<use href="#pln" x="54" y="757" width="20" height="20"/>
<use href="#ske" x="53" y="788" width="20" height="20"/>
<use href="#ext" x="53" y="850" width="20" height="20"/>
<use href="#ext" x="53" y="881" width="20" height="20"/>
<use href="#boo" x="53" y="913" width="20" height="20"/>
<use href="#ske" x="53" y="1006" width="20" height="20"/>
<use href="#par" x="77" y="1320" width="19" height="20"/>
<use href="#sur" x="77" y="1414" width="19" height="20"/>
<use href="#sur" x="77" y="1445" width="19" height="20"/>
<use href="#cur" x="77" y="1538" width="19" height="20"/>
<use href="#cur" x="77" y="1569" width="19" height="20"/>
</g>
<use href="#ext" x="53" y="663" width="20" height="20"/>
<use href="#boo" x="53" y="694" width="20" height="20"/>
<use href="#mov" x="53" y="725" width="20" height="20"/>
<use href="#boo" x="53" y="819" width="20" height="20"/>
<use href="#tra" x="53" y="944" width="20" height="20"/>
<use href="#del" x="53" y="975" width="20" height="20"/>
<use href="#ext" x="53" y="1037" width="20" height="20"/>
<use href="#ext" x="53" y="1069" width="20" height="20"/>
<use href="#del" x="53" y="1100" width="20" height="20"/>
<use href="#lof" x="53" y="1131" width="20" height="20"/>
<use href="#prj" x="53" y="1162" width="20" height="20"/>
<use href="#spl" x="53" y="1193" width="20" height="20"/>
<use href="#del" x="53" y="1225" width="20" height="20"/>
<use href="#sur" x="77" y="1383" width="19" height="20"/>
<use href="#sur" x="77" y="1476" width="19" height="20"/>
<g fill="#1250ae"><circle cx="70" cy="555" r="7"/><circle cx="70" cy="805" r="7"/></g>
<g fill="#fff"><rect x="66" y="553.500" width="8" height="3"/><rect x="66" y="803.500" width="8" height="3"/></g>

<!-- rows -->
<g class="r">
<text class="d" x="78.500" y="210.500" textLength="162" lengthAdjust="spacingAndGlyphs">Sketch - Hatch opening</text>
<text class="d s" x="78.500" y="241.700" textLength="170" lengthAdjust="spacingAndGlyphs">Extrude - Hatch opening</text>
<text class="d" x="78.500" y="272.900" textLength="124" lengthAdjust="spacingAndGlyphs">Sketch - Hatch lip</text>
<text class="d s" x="78.500" y="304.100" textLength="131" lengthAdjust="spacingAndGlyphs">Extrude - Hatch lip</text>
<text class="d s" x="78.500" y="335.300" textLength="150" lengthAdjust="spacingAndGlyphs">Draft - Hatch opening</text>
<text class="d s" x="78.500" y="366.500" textLength="48" lengthAdjust="spacingAndGlyphs">Fillet 1</text>
<text class="d s" x="78.500" y="397.700" textLength="112" lengthAdjust="spacingAndGlyphs">Draft - Hatch lip</text>
<text class="d s" x="78.500" y="428.900" textLength="115" lengthAdjust="spacingAndGlyphs">Mirror - Fuse/fin</text>
<text class="d s" x="78.500" y="460.100" textLength="112" lengthAdjust="spacingAndGlyphs">Fillet - Hatch lip</text>
<text class="d" x="78.500" y="491.300" textLength="60" lengthAdjust="spacingAndGlyphs">Plane 15</text>
<text class="d" x="78.500" y="522.500" textLength="60" lengthAdjust="spacingAndGlyphs">Plane 16</text>
<text class="d" x="78.500" y="553.700" textLength="191" lengthAdjust="spacingAndGlyphs">Sketch for hatch mold ext...</text>
<text class="d s" x="78.500" y="584.900" textLength="67" lengthAdjust="spacingAndGlyphs">Extrude 1</text>
<text class="d" x="78.500" y="616.100" textLength="190" lengthAdjust="spacingAndGlyphs">Plane - to remove hatch h...</text>
<text class="d" x="78.500" y="647.300" textLength="190" lengthAdjust="spacingAndGlyphs">Sketch - to remove hatch ...</text>
<text class="a" x="78.500" y="678.500" textLength="184" lengthAdjust="spacingAndGlyphs">Extrude - to remove hatc...</text>
<text class="a" x="78.500" y="709.700" textLength="186" lengthAdjust="spacingAndGlyphs">Boolean - to remove hatc...</text>
<text class="a" x="78.500" y="740.900" textLength="184" lengthAdjust="spacingAndGlyphs">Move face - for hatch rec...</text>
<text class="d" x="78.500" y="772.100" textLength="60" lengthAdjust="spacingAndGlyphs">Plane 17</text>
<text class="d" x="78.500" y="803.300" textLength="178" lengthAdjust="spacingAndGlyphs">Sketch - for mold extrude</text>
<text class="a" x="78.500" y="834.500" textLength="189" lengthAdjust="spacingAndGlyphs">Boolean union - to merge ...</text>
<text class="d s" x="78.500" y="865.700" textLength="67" lengthAdjust="spacingAndGlyphs">Extrude 3</text>
<text class="d s" x="78.500" y="896.900" textLength="67" lengthAdjust="spacingAndGlyphs">Extrude 2</text>
<text class="d s" x="78.500" y="928.100" textLength="69" lengthAdjust="spacingAndGlyphs">Boolean 1</text>
<text class="a" x="78.500" y="959.300" textLength="85" lengthAdjust="spacingAndGlyphs">Transform 1</text>
<text class="a" x="78.500" y="990.500" textLength="90" lengthAdjust="spacingAndGlyphs">Delete face 1</text>
<text class="d" x="78.500" y="1021.700" textLength="146" lengthAdjust="spacingAndGlyphs">Sketch Parting Plane</text>
<text class="a" x="78.500" y="1052.900" textLength="67" lengthAdjust="spacingAndGlyphs">Extrude 4</text>
<text class="a" x="78.500" y="1084.100" textLength="67" lengthAdjust="spacingAndGlyphs">Extrude 5</text>
<text class="a" x="78.500" y="1115.300" textLength="91" lengthAdjust="spacingAndGlyphs">Delete face 2</text>
<text class="a" x="78.500" y="1146.500" textLength="39" lengthAdjust="spacingAndGlyphs">Loft 1</text>
<text class="a" x="78.500" y="1177.700" textLength="121" lengthAdjust="spacingAndGlyphs">Projected curve 1</text>
<text class="a" x="78.500" y="1208.900" textLength="43" lengthAdjust="spacingAndGlyphs">Split 1</text>
<text class="a" x="78.500" y="1240.100" textLength="91" lengthAdjust="spacingAndGlyphs">Delete face 3</text>
<text class="a" x="74.500" y="1304.500" textLength="59" lengthAdjust="spacingAndGlyphs">Parts (1)</text>
<text class="d" x="101" y="1335.500" textLength="64" lengthAdjust="spacingAndGlyphs">Fuse half</text>
<text class="a" x="74.500" y="1367.200" textLength="85" lengthAdjust="spacingAndGlyphs">Surfaces (4)</text>
<text class="a" x="101" y="1398.200" textLength="153" lengthAdjust="spacingAndGlyphs">Fuse surface for mold</text>
<text class="d" x="101" y="1429.200" textLength="153" lengthAdjust="spacingAndGlyphs">Fuse surface for mold</text>
<text class="d" x="101" y="1460.200" textLength="153" lengthAdjust="spacingAndGlyphs">Fuse surface for mold</text>
<text class="a" x="101" y="1491.200" textLength="132" lengthAdjust="spacingAndGlyphs">Surface Mold Body</text>
<text class="a" x="74.500" y="1523.200" textLength="71" lengthAdjust="spacingAndGlyphs">Curves (2)</text>
<text class="d" x="101" y="1554.200" textLength="53" lengthAdjust="spacingAndGlyphs">Curve 1</text>
<text class="d" x="101" y="1585.200" textLength="53" lengthAdjust="spacingAndGlyphs">Curve 2</text>
</g>

<!-- scrollbar, divider, chevrons -->
<rect x="53" y="1261" width="228" height="8" fill="#b6b6b6"/>
<rect x="47.700" y="1281" width="239.300" height="2" fill="#d4d4d4"/>
<g fill="none" stroke="#555" stroke-width="2.400"><path d="M54 1295L59.500 1301L65 1295M54 1358L59.500 1364L65 1358M54 1514L59.500 1520L65 1514"/></g>

<!-- collapse toggle -->
<rect x="293" y="979.500" width="39.500" height="38.500" fill="#fff" stroke="#c8c8c8"/>
<rect x="292" y="980" width="2" height="37.500" fill="#fff"/>
<path d="M301 991L305 995L309 991" fill="none" stroke="#333" stroke-width="1.300"/>
<path d="M305 996V1011M309 991.500H323M309 996.500H323M309 1002H323M309 1007.500H323" stroke="#888" stroke-width="2"/>
</svg>
</body></html>
